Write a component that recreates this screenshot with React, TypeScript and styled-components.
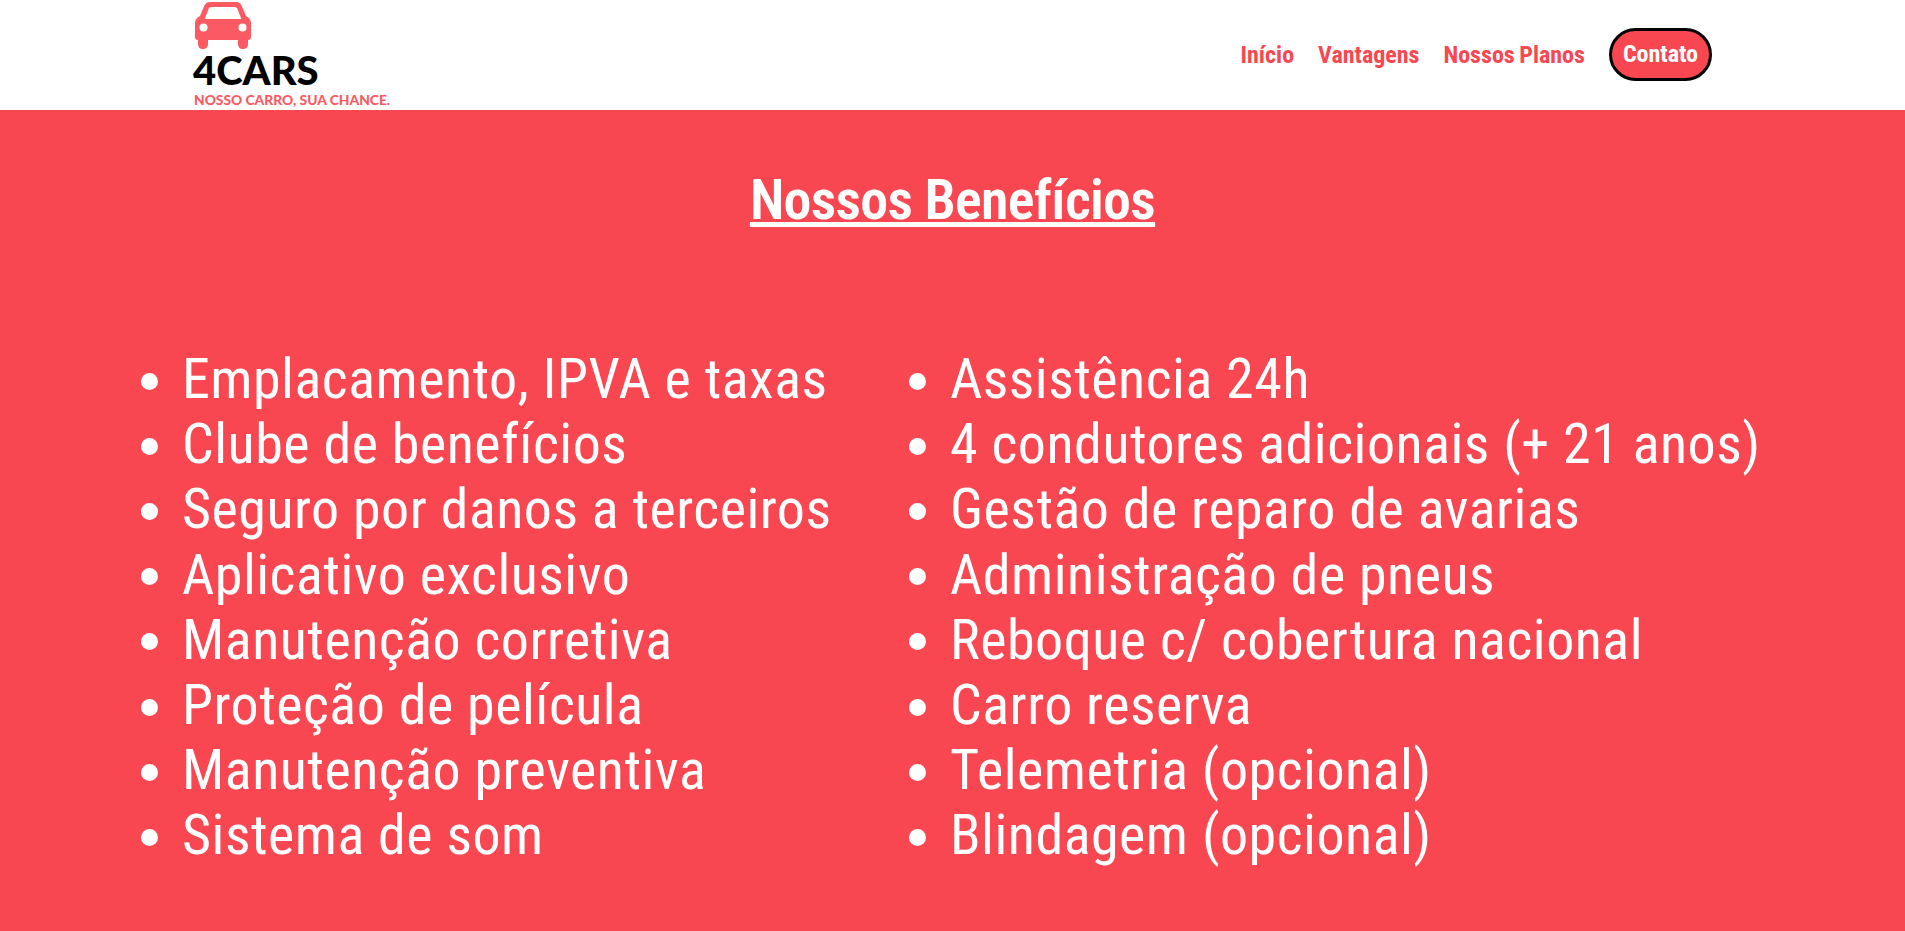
import React from "react";
import styled, { createGlobalStyle } from "styled-components";

const RED = "#f94751";
const LOGO_RED = "#fb5a63";

const leftItems = [
  "Emplacamento, IPVA e taxas",
  "Clube de benefícios",
  "Seguro por danos a terceiros",
  "Aplicativo exclusivo",
  "Manutenção corretiva",
  "Proteção de película",
  "Manutenção preventiva",
  "Sistema de som",
];

const rightItems = [
  "Assistência 24h",
  "4 condutores adicionais (+ 21 anos)",
  "Gestão de reparo de avarias",
  "Administração de pneus",
  "Reboque c/ cobertura nacional",
  "Carro reserva",
  "Telemetria (opcional)",
  "Blindagem (opcional)",
];

function CarIcon() {
  return (
    <CarSvg viewBox="0 0 56 47">
      <path
        fill={LOGO_RED}
        d="M15 0h26c3 0 5 1.500 6 4.500L51 14c3 1.500 5 4 5 7v14c0 2-1 3-3 3v4c0 3-2 5-5 5s-5-2-5-5v-4H13v4c0 3-2 5-5 5s-5-2-5-5v-4c-2 0-3-1-3-3V21c0-3 2-5.500 5-7L9 4.500C10 1.500 12 0 15 0z"
      />
      <path fill="#fff" d="M16.500 5h23c1.500 0 2.500.8 3 2l3.800 10H9.700l3.800-10c.5-1.200 1.500-2 3-2z" />
      <circle cx="8.500" cy="25.500" r="4" fill="#fff" />
      <circle cx="47.500" cy="25.500" r="4" fill="#fff" />
    </CarSvg>
  );
}

export default function App() {
  return (
    <>
      <GlobalStyle />
      <Header>
        <Logo>
          <CarIcon />
          <Brand>4CARS</Brand>
          <Slogan>NOSSO CARRO, SUA CHANCE.</Slogan>
        </Logo>
        <Nav>
          <NavLink>Início</NavLink>
          <NavLink>Vantagens</NavLink>
          <NavLink>Nossos Planos</NavLink>
          <ContactButton>Contato</ContactButton>
        </Nav>
      </Header>
      <Benefits>
        <Title>Nossos Benefícios</Title>
        <Columns>
          <BenefitList>
            {leftItems.map((item) => (
              <BenefitItem key={item}>{item}</BenefitItem>
            ))}
          </BenefitList>
          <BenefitList>
            {rightItems.map((item) => (
              <BenefitItem key={item}>{item}</BenefitItem>
            ))}
          </BenefitList>
        </Columns>
      </Benefits>
    </>
  );
}

const GlobalStyle = createGlobalStyle`
  html, body {
    margin: 0;
    height: 100%;
    overflow: hidden;
    background: ${RED};
    font-family: "Roboto", "Liberation Sans", sans-serif;
    font-stretch: 75%;
  }
`;

const Header = styled.header`
  height: 110px;
  background: #fff;
  display: flex;
  align-items: flex-start;
  justify-content: space-between;
  padding: 0 193px 0 195px;
`;

const Logo = styled.div`
  display: flex;
  flex-direction: column;
  align-items: flex-start;
`;

const CarSvg = styled.svg`
  width: 56px;
  height: 47px;
  margin-top: 2px;
`;

const Brand = styled.div`
  font-family: "Lato", "Liberation Sans", sans-serif;
  font-weight: 900;
  font-size: 40px;
  line-height: 36px;
  margin: 3px 0 0 -2px;
  color: #000;
`;

const Slogan = styled.div`
  font-family: "Lato", "Liberation Sans", sans-serif;
  font-weight: 900;
  font-size: 13.800px;
  line-height: 14px;
  margin: 5px 0 0 -1px;
  white-space: nowrap;
  color: ${LOGO_RED};
`;

const Nav = styled.nav`
  display: flex;
  align-items: center;
  gap: 24px;
  padding-top: 28px;
`;

const NavLink = styled.a`
  font-size: 24px;
  font-weight: 700;
  word-spacing: -1px;
  color: ${RED};
`;

const ContactButton = styled.a`
  font-size: 24px;
  font-weight: 700;
  color: #fff;
  background: ${RED};
  border: 3px solid #000;
  border-radius: 27px;
  padding: 10px 11px;
  line-height: 27px;
`;

const Benefits = styled.section`
  background: ${RED};
  color: #fff;
  padding-top: 57px;
`;

const Title = styled.h2`
  margin: 0;
  text-align: center;
  font-size: 56px;
  line-height: 66px;
  font-weight: 600;
  letter-spacing: -0.700px;
  text-decoration: underline;
`;

const Columns = styled.div`
  display: grid;
  grid-template-columns: 768px 1fr;
  padding: 114px 0 0 141px;
`;

const BenefitList = styled.ul`
  margin: 0;
  padding: 0;
  list-style: none;
  font-size: 56px;
  line-height: 65.200px;
  letter-spacing: 0.500px;
  white-space: nowrap;
`;

const BenefitItem = styled.li`
  display: flex;
  align-items: center;
  gap: 24px;

  &::before {
    content: "";
    flex: none;
    width: 17px;
    height: 17px;
    margin-top: 3px;
    border-radius: 50%;
    background: #fff;
  }
`;
